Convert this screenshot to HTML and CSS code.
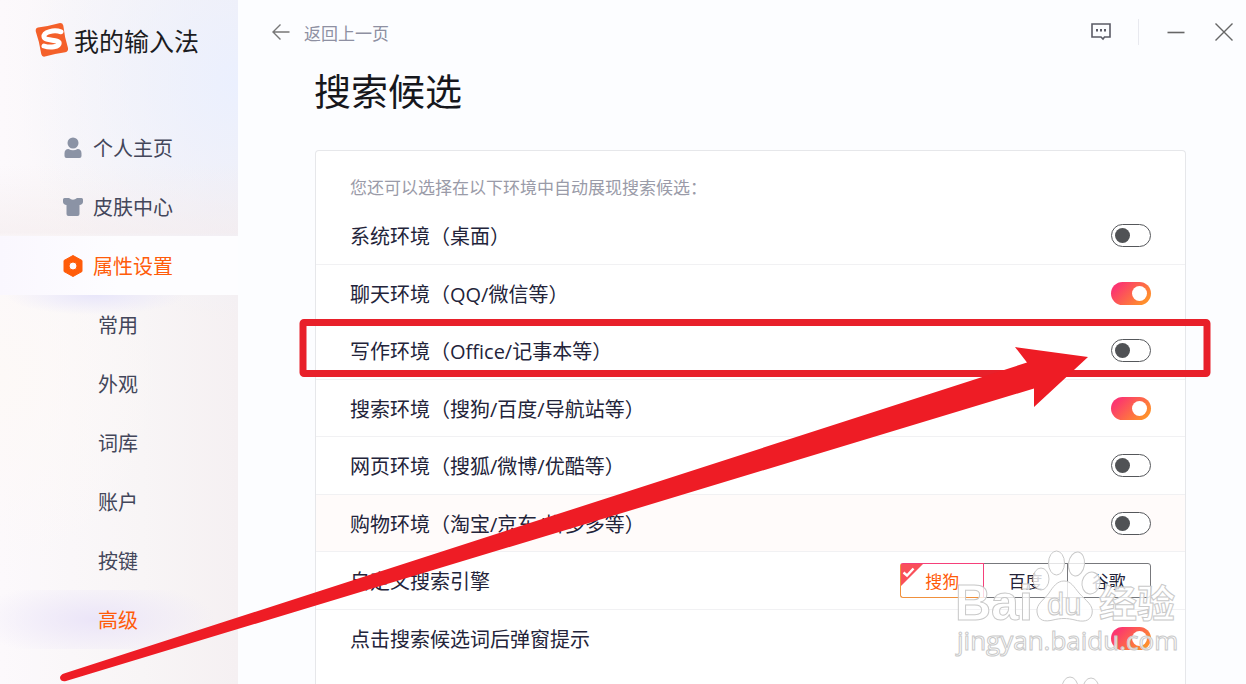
FILE: index.html
```html
<!DOCTYPE html>
<html lang="zh-CN">
<head>
<meta charset="utf-8">
<title>我的输入法 - 搜索候选</title>
<link rel="stylesheet" href="styles.css">
</head>
<body>
<div class="app">
  <aside class="sidebar">
    <div class="brand">
      <svg class="brand-logo" viewBox="0 0 34 36" aria-hidden="true">
        <path d="M3 5.500Q14 4 24 1.200Q27.500.500 28.300 3.500Q29.500 15 33 26Q33.600 29.500 30.300 30.200Q20 31.500 10 34.600Q7 35.300 6.300 32.300Q4.500 20 .8 9.500Q.2 6.200 3 5.500Z" fill="#f4602a"/>
        <path d="M26 9.800C19 7.500 8.500 9.800 9 14.800C9.500 19.500 24 17 24.200 21C24.300 25 15 26 9 24" fill="none" stroke="#fff" stroke-width="5" stroke-linecap="round"/>
      </svg>
      <span>我的输入法</span>
    </div>
    <nav class="nav">
      <a class="nav-item" href="#home">
        <svg class="nav-icon" viewBox="0 0 20 22" aria-hidden="true"><circle cx="10" cy="6" r="5.500" fill="#8b93a5"/><path d="M1.500 19v-2.500q0-4.500 4-4.500 2 1.200 4.500 1.200T14.500 12q4 0 4 4.500V19q0 2-2 2h-13q-2 0-2-2Z" fill="#8b93a5"/></svg>
        <span>个人主页</span>
      </a>
      <a class="nav-item" href="#skin">
        <svg class="nav-icon" viewBox="0 0 20 22" aria-hidden="true"><path d="M1.500 2H6q4 3.500 8 0h4.500q1.500 0 1.500 1.500V6q-.3 2.500-3.500 3v9q0 2-2 2h-9q-2 0-2-2V9Q.3 8.500 0 6V3.500Q0 2 1.500 2Z" fill="#8b93a5"/></svg>
        <span>皮肤中心</span>
      </a>
      <a class="nav-item nav-item-open" href="#settings" aria-current="true">
        <svg class="nav-icon" viewBox="0 0 20 22" aria-hidden="true"><path fill-rule="evenodd" d="M10 .5 19 5.500V16.500L10 21.500 1 16.500V5.500ZM10 7a4 4 0 1 0 0 8a4 4 0 1 0 0-8Z" fill="#ff5c0a" stroke="#ff5c0a" stroke-linejoin="round"/></svg>
        <span>属性设置</span>
      </a>
      <a class="nav-item nav-sub" href="#common">常用</a>
      <a class="nav-item nav-sub" href="#look">外观</a>
      <a class="nav-item nav-sub" href="#dict">词库</a>
      <a class="nav-item nav-sub" href="#account">账户</a>
      <a class="nav-item nav-sub" href="#keys">按键</a>
      <a class="nav-item nav-sub nav-sub-active" href="#advanced" aria-current="page">高级</a>
    </nav>
  </aside>

  <main class="main">
    <header class="topbar">
      <a class="back" href="#back">
        <svg class="back-icon" viewBox="0 0 18 18" aria-hidden="true"><path d="M17.500 9H1.500M8.500 1.500 1 9l7.500 7.500" fill="none" stroke="#777" stroke-width="1.400"/></svg>
        <span>返回上一页</span>
      </a>
      <div class="window-tools">
        <button class="tool" type="button" aria-label="反馈">
          <svg class="tool-icon" viewBox="0 0 22 22" aria-hidden="true"><path d="M2 3h18v13h-5.500L13 18l-2-2H2Z" fill="none" stroke="#5a5b66" stroke-width="1.600"/><path d="M6 8h2v2.500H6zM10 8h2v2.500h-2zM14 8h2v2.500h-2z" fill="#5a5b66"/></svg>
        </button>
        <span class="tool-divider"></span>
        <button class="tool" type="button" aria-label="最小化">
          <svg class="tool-icon" viewBox="0 0 22 22" aria-hidden="true"><path d="M2.500 11.500h17" stroke="#666" stroke-width="1.600"/></svg>
        </button>
        <button class="tool" type="button" aria-label="关闭">
          <svg class="tool-icon" viewBox="0 0 22 22" aria-hidden="true"><path d="m2.500 2.500 17 17m0-17-17 17" stroke="#666" stroke-width="1.400"/></svg>
        </button>
      </div>
    </header>

    <h1 class="title">搜索候选</h1>

    <section class="card">
      <p class="hint">您还可以选择在以下环境中自动展现搜索候选：</p>
      <div class="rows">
        <div class="row"><label for="env-system">系统环境（桌面）</label><input class="switch" id="env-system" type="checkbox" role="switch"></div>
        <div class="row"><label for="env-chat">聊天环境（QQ/微信等）</label><input class="switch" id="env-chat" type="checkbox" role="switch" checked></div>
        <div class="row"><label for="env-write">写作环境（Office/记事本等）</label><input class="switch" id="env-write" type="checkbox" role="switch"></div>
        <div class="row"><label for="env-search">搜索环境（搜狗/百度/导航站等）</label><input class="switch" id="env-search" type="checkbox" role="switch" checked></div>
        <div class="row"><label for="env-web">网页环境（搜狐/微博/优酷等）</label><input class="switch" id="env-web" type="checkbox" role="switch"></div>
        <div class="row row-hover"><label for="env-shop">购物环境（淘宝/京东/拼多多等）</label><input class="switch" id="env-shop" type="checkbox" role="switch"></div>
        <div class="row">
          <span id="engine-label">自定义搜索引擎</span>
          <div class="engines" role="group" aria-labelledby="engine-label">
            <button class="engine engine-on" type="button" aria-pressed="true">
              <svg class="engine-check" viewBox="0 0 22 22" aria-hidden="true"><path d="M0 0h22L0 22Z" fill="#f9505a"/><path d="m2.500 8.500 3.500 3 6.500-7" fill="none" stroke="#fff" stroke-width="2.400"/></svg>
              搜狗
            </button>
            <button class="engine" type="button" aria-pressed="false">百度</button>
            <button class="engine" type="button" aria-pressed="false">谷歌</button>
          </div>
        </div>
        <div class="row row-last"><label for="popup">点击搜索候选词后弹窗提示</label><input class="switch" id="popup" type="checkbox" role="switch" checked></div>
      </div>
    </section>
  </main>

  <svg class="overlay" viewBox="0 0 1246 684">
    <rect x="303" y="322.500" width="904" height="51" rx="1" fill="none" stroke="#e8202a" stroke-width="7" stroke-linejoin="round"/>
    <path d="M64 673.500 1027 362.500 1015 347 1088 357 1034 407V388.500L66 681Q61 682 60 678Q60 675 64 673.500Z" fill="#ee1c25"/>
    <g class="mark">
      <ellipse cx="1041" cy="579" rx="8" ry="11"/>
      <ellipse cx="1056.500" cy="563" rx="8" ry="12"/>
      <ellipse cx="1076.500" cy="564" rx="8" ry="12" transform="rotate(8 1076.500 564)"/>
      <ellipse cx="1091" cy="583" rx="9" ry="11" transform="rotate(12 1091 583)"/>
      <path d="M1064 581c7 0 10 6 15 12 7 8 15 12 13 21-2 8-10 8-17 6-8-2-14-2-22 0-8 2-15 1-16-8-1-8 7-12 12-19 4-6 8-12 15-12Z"/>
      <text class="mark-bai" x="955" y="620">Bai</text>
      <text class="mark-du" x="1047" y="615">du</text>
      <text class="mark-cn" x="1099" y="617">经验</text>
      <text class="mark-url" x="957" y="650">jingyan.baidu.com</text>
      <ellipse cx="1070" cy="688" rx="8" ry="11"/>
      <ellipse cx="1091" cy="689" rx="8" ry="11"/>
    </g>
  </svg>
</div>
</body>
</html>
```

FILE: styles.css
```css
* {
  box-sizing: border-box;
}

body {
  margin: 0;
  font-family: "Open Sans", "Noto Sans CJK SC", sans-serif;
  font-size: 20px;
  color: #23243a;
  background: #fcfdff;
}

.app {
  position: relative;
  display: flex;
  min-height: 100vh;
  overflow: hidden;
}

/* Sidebar */
.sidebar {
  flex: 0 0 238px;
  background:
    linear-gradient(180deg, transparent 24%, rgba(244, 236, 238, 0.6) 34%, transparent 35%),
    radial-gradient(ellipse 220px 240px at 100% 12%, #ebf0fe, transparent),
    radial-gradient(ellipse 160px 200px at 0% 55%, #fdf9f7, transparent),
    linear-gradient(90deg, #fcf9fc 0%, #f8f5f6 60%, #f5f0f2 100%);
}

.brand {
  display: flex;
  align-items: center;
  gap: 5px;
  height: 80px;
  margin-bottom: 38px;
  padding-left: 35px;
  font-size: 25px;
  color: #1b1c22;
}

.brand-logo {
  width: 34px;
  height: 36px;
}

.nav {
  display: flex;
  flex-direction: column;
}

.nav-item {
  display: flex;
  align-items: center;
  gap: 10px;
  height: 59px;
  padding-left: 63px;
  color: #43465a;
  text-decoration: none;
}

.nav-icon {
  width: 20px;
  height: 22px;
}

.nav-item-open {
  color: #ff5c0a;
  background: linear-gradient(90deg, #faf7fe, #fdfdff 50%);
}

.nav-item-open + .nav-sub {
  background: radial-gradient(ellipse 90px 20px at 40% 0%, #e8e6fa, transparent);
}

.nav-sub {
  padding-left: 98px;
}

.nav-sub-active {
  color: #ff5c0a;
  background: radial-gradient(ellipse 120px 40px at 40% 50%, #ebe5f8, transparent);
}

/* Main area */
.main {
  flex: 1;
  display: flex;
  flex-direction: column;
  min-width: 0;
}

.topbar {
  display: flex;
  align-items: center;
  justify-content: space-between;
  height: 64px;
  padding: 0 11px 0 34px;
}

.back {
  display: flex;
  align-items: center;
  gap: 14px;
  font-size: 17px;
  color: #8e90a2;
  text-decoration: none;
}

.back-icon {
  width: 18px;
  height: 18px;
}

.window-tools {
  display: flex;
  align-items: center;
  gap: 26px;
}

.tool {
  display: flex;
  padding: 0;
  border: 0;
  background: none;
}

.tool-icon {
  width: 22px;
  height: 22px;
}

.tool-divider {
  width: 1px;
  height: 26px;
  background: #e8e9ef;
}

.title {
  margin: 0 0 30px 76px;
  font-size: 37px;
  line-height: 56px;
  font-weight: 400;
  color: #16171c;
}

.card {
  flex: 1;
  margin: 0 60px 0 77px;
  padding-top: 18px;
  border: 1px solid #e6e7ea;
  border-bottom: 0;
  border-radius: 4px 4px 0 0;
  background: #fff;
}

.hint {
  margin: 0;
  padding: 0 34px;
  font-size: 17px;
  line-height: 38px;
  color: #9a9ba8;
}

.rows {
  display: grid;
  grid-auto-rows: 58px 57px;
}

.row {
  display: flex;
  align-items: center;
  justify-content: space-between;
  padding: 0 34px;
  border-bottom: 1px solid #f1f1f3;
}

.row-hover {
  background: #fffbfa;
}

.row-last {
  border-bottom: 0;
}

.switch {
  appearance: none;
  display: flex;
  align-items: center;
  width: 40px;
  height: 23px;
  margin: 0;
  padding: 0 3px;
  border: 1px solid #55575b;
  border-radius: 12px;
  background: #fff;
}

.switch::before {
  content: "";
  width: 15px;
  height: 15px;
  border-radius: 50%;
  background: #505255;
}

.switch:checked {
  justify-content: flex-end;
  padding: 0 4px;
  border: 0;
  background: linear-gradient(135deg, #fb3570 15%, #ff8f2c 85%);
}

.switch:checked::before {
  background: #fff;
}

.engines {
  display: flex;
  width: 251px;
  height: 35px;
}

.engine {
  position: relative;
  flex: 1;
  margin-left: -1px;
  padding: 0;
  border: 1px solid #77787c;
  background: #fff;
  font-family: inherit;
  font-size: 17px;
  color: #23243a;
}

.engine:first-child {
  margin-left: 0;
  border-radius: 3px 0 0 3px;
}

.engine:last-child {
  border-radius: 0 3px 3px 0;
}

.engine-on {
  z-index: 1;
  border-color: #f5407a #f5407a #f0903c #f0903c;
  color: #ff5c0a;
}

.engine-check {
  position: absolute;
  top: 0;
  left: 0;
  width: 22px;
  height: 22px;
}

/* Annotation and watermark drawn over the window */
.overlay {
  position: absolute;
  z-index: 2;
  top: 0;
  left: 0;
  width: 100%;
  pointer-events: none;
}

.mark {
  fill: rgba(255, 255, 255, 0.8);
  stroke: #c9c9c9;
  stroke-width: 1;
}

.mark-bai {
  font: bold 50px "Liberation Sans", sans-serif;
}

.mark-du {
  font: 31px "Liberation Sans", sans-serif;
}

.mark-cn {
  font: bold 38px "Noto Sans CJK SC", sans-serif;
}

.mark-url {
  font: 26px "Open Sans", sans-serif;
}
```
